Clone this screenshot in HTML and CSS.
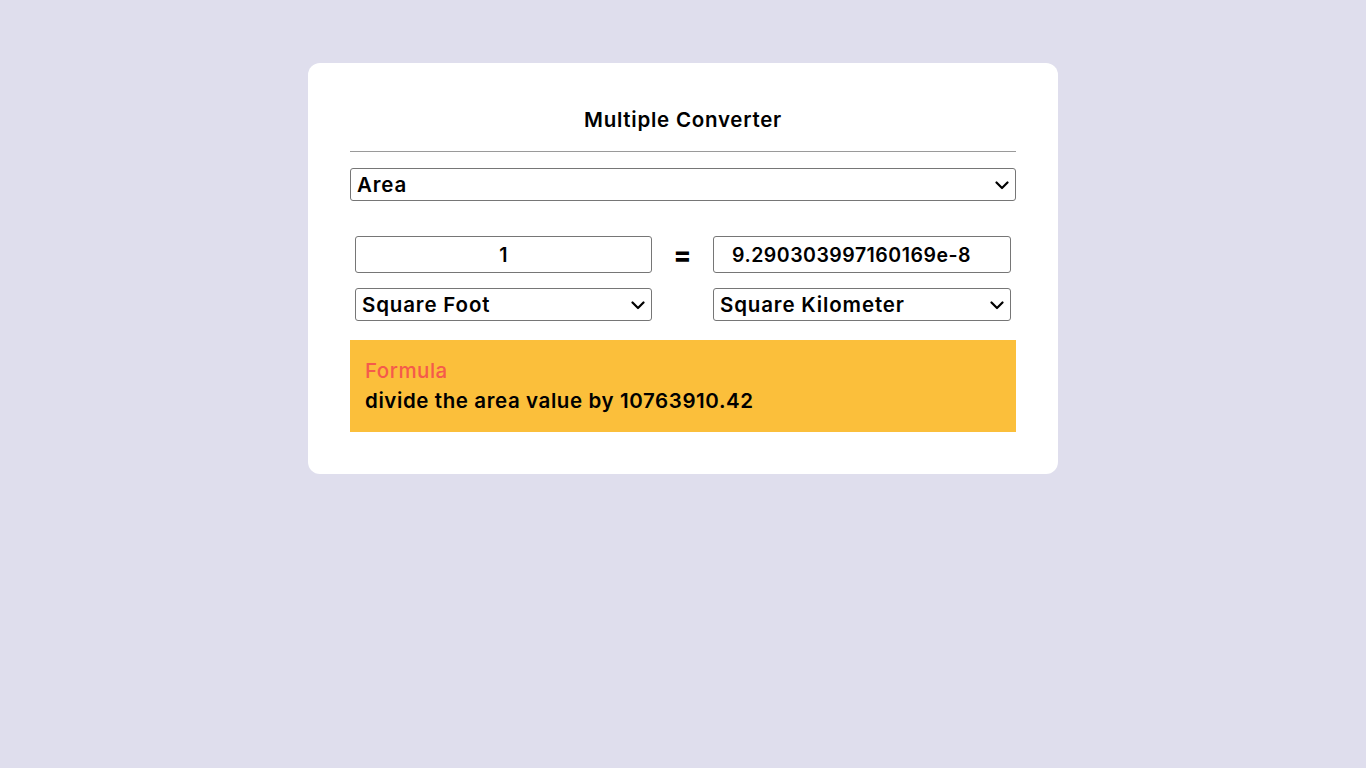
FILE: index.html
```html
<!DOCTYPE html>
<html lang="en">
<head>
<meta charset="utf-8">
<title>Multiple Converter</title>
<link rel="stylesheet" href="styles.css">
</head>
<body>
<main class="card">
  <h1 class="title">Multiple Converter</h1>
  <hr class="rule">
  <div class="select-wrap">
    <select class="category">
      <option>Area</option>
    </select>
    <svg class="chev" width="14" height="9" viewBox="0 0 14 9"><path d="M1.5 1.5 L7 7 L12.5 1.5" fill="none" stroke="#000" stroke-width="2.2" stroke-linecap="round" stroke-linejoin="round"/></svg>
  </div>
  <div class="grid">
    <input class="field" type="text" value="1">
    <div class="eq">=</div>
    <input class="field field-right" type="text" value="9.290303997160169e-8">
    <div class="select-wrap">
      <select class="unit"><option>Square Foot</option></select>
      <svg class="chev" width="14" height="9" viewBox="0 0 14 9"><path d="M1.5 1.5 L7 7 L12.5 1.5" fill="none" stroke="#000" stroke-width="2.2" stroke-linecap="round" stroke-linejoin="round"/></svg>
    </div>
    <div></div>
    <div class="select-wrap">
      <select class="unit"><option>Square Kilometer</option></select>
      <svg class="chev" width="14" height="9" viewBox="0 0 14 9"><path d="M1.5 1.5 L7 7 L12.5 1.5" fill="none" stroke="#000" stroke-width="2.2" stroke-linecap="round" stroke-linejoin="round"/></svg>
    </div>
  </div>
  <section class="formula">
    <div class="formula-label">Formula</div>
    <div class="formula-text">divide the area value by 10763910.42</div>
  </section>
</main>
</body>
</html>
```
FILE: styles.css
```css
html, body {
  margin: 0;
  padding: 0;
}
body {
  background: #dfdeed;
  font-family: "Inter", "Noto Sans", sans-serif;
  color: #000;
  min-height: 768px;
}
.card {
  width: 666px;
  margin: 63px auto 0;
  background: #fff;
  border-radius: 12px;
  padding: 42px 42px 42px;
}
.title {
  margin: 0;
  text-align: center;
  font-size: 20.5px;
  font-weight: 600;
  letter-spacing: 0.75px;
  line-height: 30px;
}
.rule {
  margin: 16px 0 16px;
  border: 0;
  border-top: 1px solid #9a9a9a;
  height: 0;
}
.select-wrap {
  position: relative;
}
.chev {
  position: absolute;
  right: 7px;
  top: 50%;
  margin-top: -4px;
  pointer-events: none;
}
select {
  -webkit-appearance: none;
  appearance: none;
  font-family: inherit;
  font-weight: 600;
  font-size: 20.5px;
  letter-spacing: 0.85px;
  color: #000;
  background: #fff;
  border: 1px solid #767676;
  border-radius: 3px;
  display: block;
  width: 100%;
  height: 33px;
  padding: 0 24px 0 6px;
}
.grid {
  margin: 35px 5px 0;
  display: grid;
  grid-template-columns: 297px 1fr 298px;
  row-gap: 15px;
  align-items: center;
}
.field {
  box-sizing: border-box;
  height: 37px;
  width: 100%;
  border: 1px solid #767676;
  border-radius: 3px;
  font-family: inherit;
  font-weight: 600;
  font-size: 19.5px;
  letter-spacing: 0.5px;
  text-align: center;
  padding: 0 8px;
  color: #000;
}
.field-right {
  text-align: left;
  padding-left: 18px;
}
.eq {
  text-align: center;
  font-size: 26px;
  font-weight: 800;
  line-height: 37px;
}
.formula {
  margin-top: 19px;
  background: #fbbf3b;
  padding: 16px 15px 16px;
}
.formula-label {
  color: #f55a4b;
  font-size: 20.5px;
  font-weight: 500;
  letter-spacing: 0.5px;
  line-height: 30px;
}
.formula-text {
  font-size: 20.5px;
  font-weight: 600;
  letter-spacing: 0.6px;
  line-height: 30px;
}
```
